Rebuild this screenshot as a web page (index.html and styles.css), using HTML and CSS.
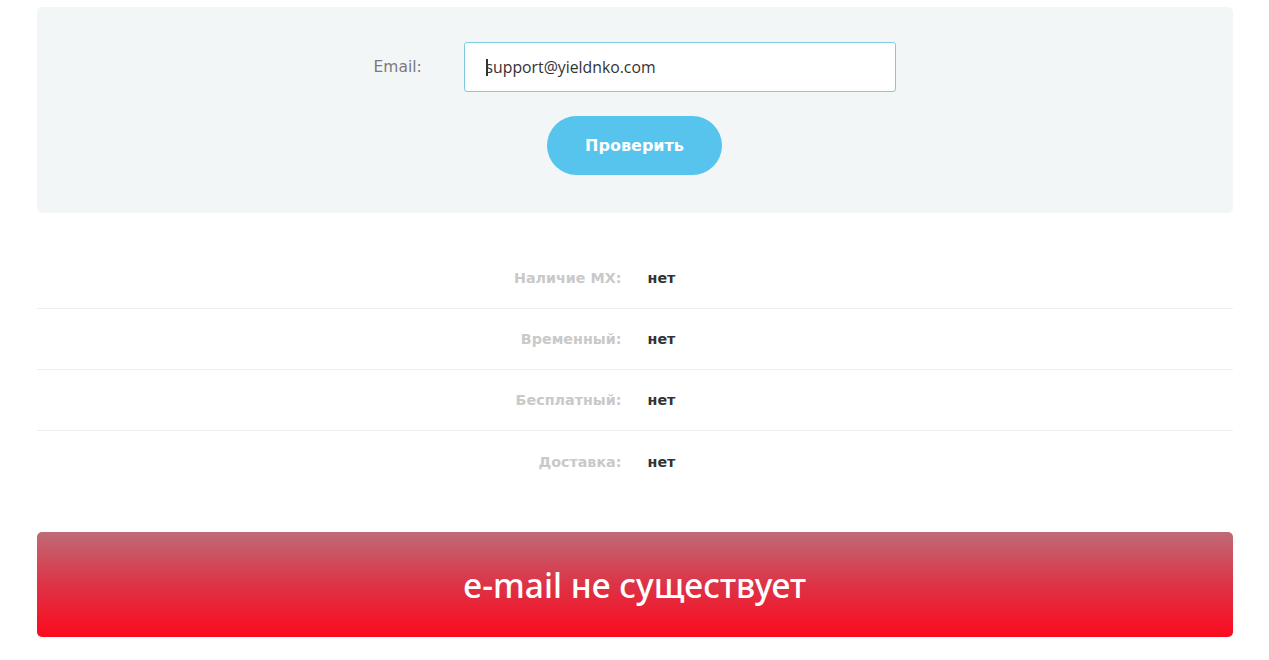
FILE: index.html
```html
<!DOCTYPE html>
<html lang="ru">
<head>
<meta charset="utf-8">
<title>Проверка email</title>
<link rel="stylesheet" href="styles.css">
</head>
<body>
<div class="wrap">
  <section class="panel">
    <div class="field">
      <label class="field-label">Email:</label>
      <div class="input">support@yieldnko.com</div>
    </div>
    <button class="btn">Проверить</button>
  </section>
  <section class="results">
    <div class="row"><span class="k">Наличие MX:</span><span class="v">нет</span></div>
    <div class="row"><span class="k">Временный:</span><span class="v">нет</span></div>
    <div class="row"><span class="k">Бесплатный:</span><span class="v">нет</span></div>
    <div class="row"><span class="k">Доставка:</span><span class="v">нет</span></div>
  </section>
  <div class="banner">e-mail не существует</div>
</div>
</body>
</html>
```
FILE: styles.css
```css
* { box-sizing: border-box; }
html, body { margin: 0; padding: 0; background: #fff; }
body { font-family: "DejaVu Sans", "Noto Sans", sans-serif; }
.wrap { width: 1196px; margin: 0 auto; padding-top: 7px; }
.panel {
  background: #f3f6f7;
  border-radius: 5px;
  padding: 35px 0 38px;
  display: flex;
  flex-direction: column;
  align-items: center;
  gap: 24px;
}
.field { display: flex; align-items: center; gap: 39px; }
.field-label { font-size: 15.5px; color: #7a7a7a; width: 51px; white-space: nowrap; }
.input {
  width: 432px;
  height: 50px;
  background: #fff;
  border: 1.5px solid #7fcbe1;
  border-radius: 3px;
  padding: 0 0 0 21px;
  display: flex;
  align-items: center;
  font-family: "Open Sans", "Noto Sans", sans-serif;
  font-size: 15.8px;
  color: #333;
}
.input::before { content: ""; width: 2px; height: 17px; background: #333; margin-right: -2px; }
.btn {
  width: 175px;
  height: 59px;
  border: none;
  border-radius: 30px;
  background: #56c4ec;
  color: #fff;
  font-family: "DejaVu Sans", sans-serif;
  font-weight: bold;
  font-size: 16px;
  padding: 0;
}
.results { margin-top: 35px; }
.row {
  height: 61px;
  display: flex;
  align-items: center;
  border-bottom: 1px solid #eeeeee;
  font-weight: bold;
  font-size: 14.3px;
}
.row:last-child { border-bottom: none; }
.k { flex: 1; text-align: right; color: #c9c9c9; padding-right: 12px; }
.v { flex: 1; text-align: left; color: #333; padding-left: 14px; }
.banner {
  margin-top: 40px;
  height: 105px;
  border-radius: 5px;
  background: linear-gradient(to bottom, #bf6b77 0%, #dd3346 50%, #fc0a1e 100%);
  color: #fff;
  display: flex;
  align-items: center;
  justify-content: center;
  font-family: "Noto Sans", "Open Sans", sans-serif;
  font-weight: 500;
  font-size: 33.5px;
}
```
